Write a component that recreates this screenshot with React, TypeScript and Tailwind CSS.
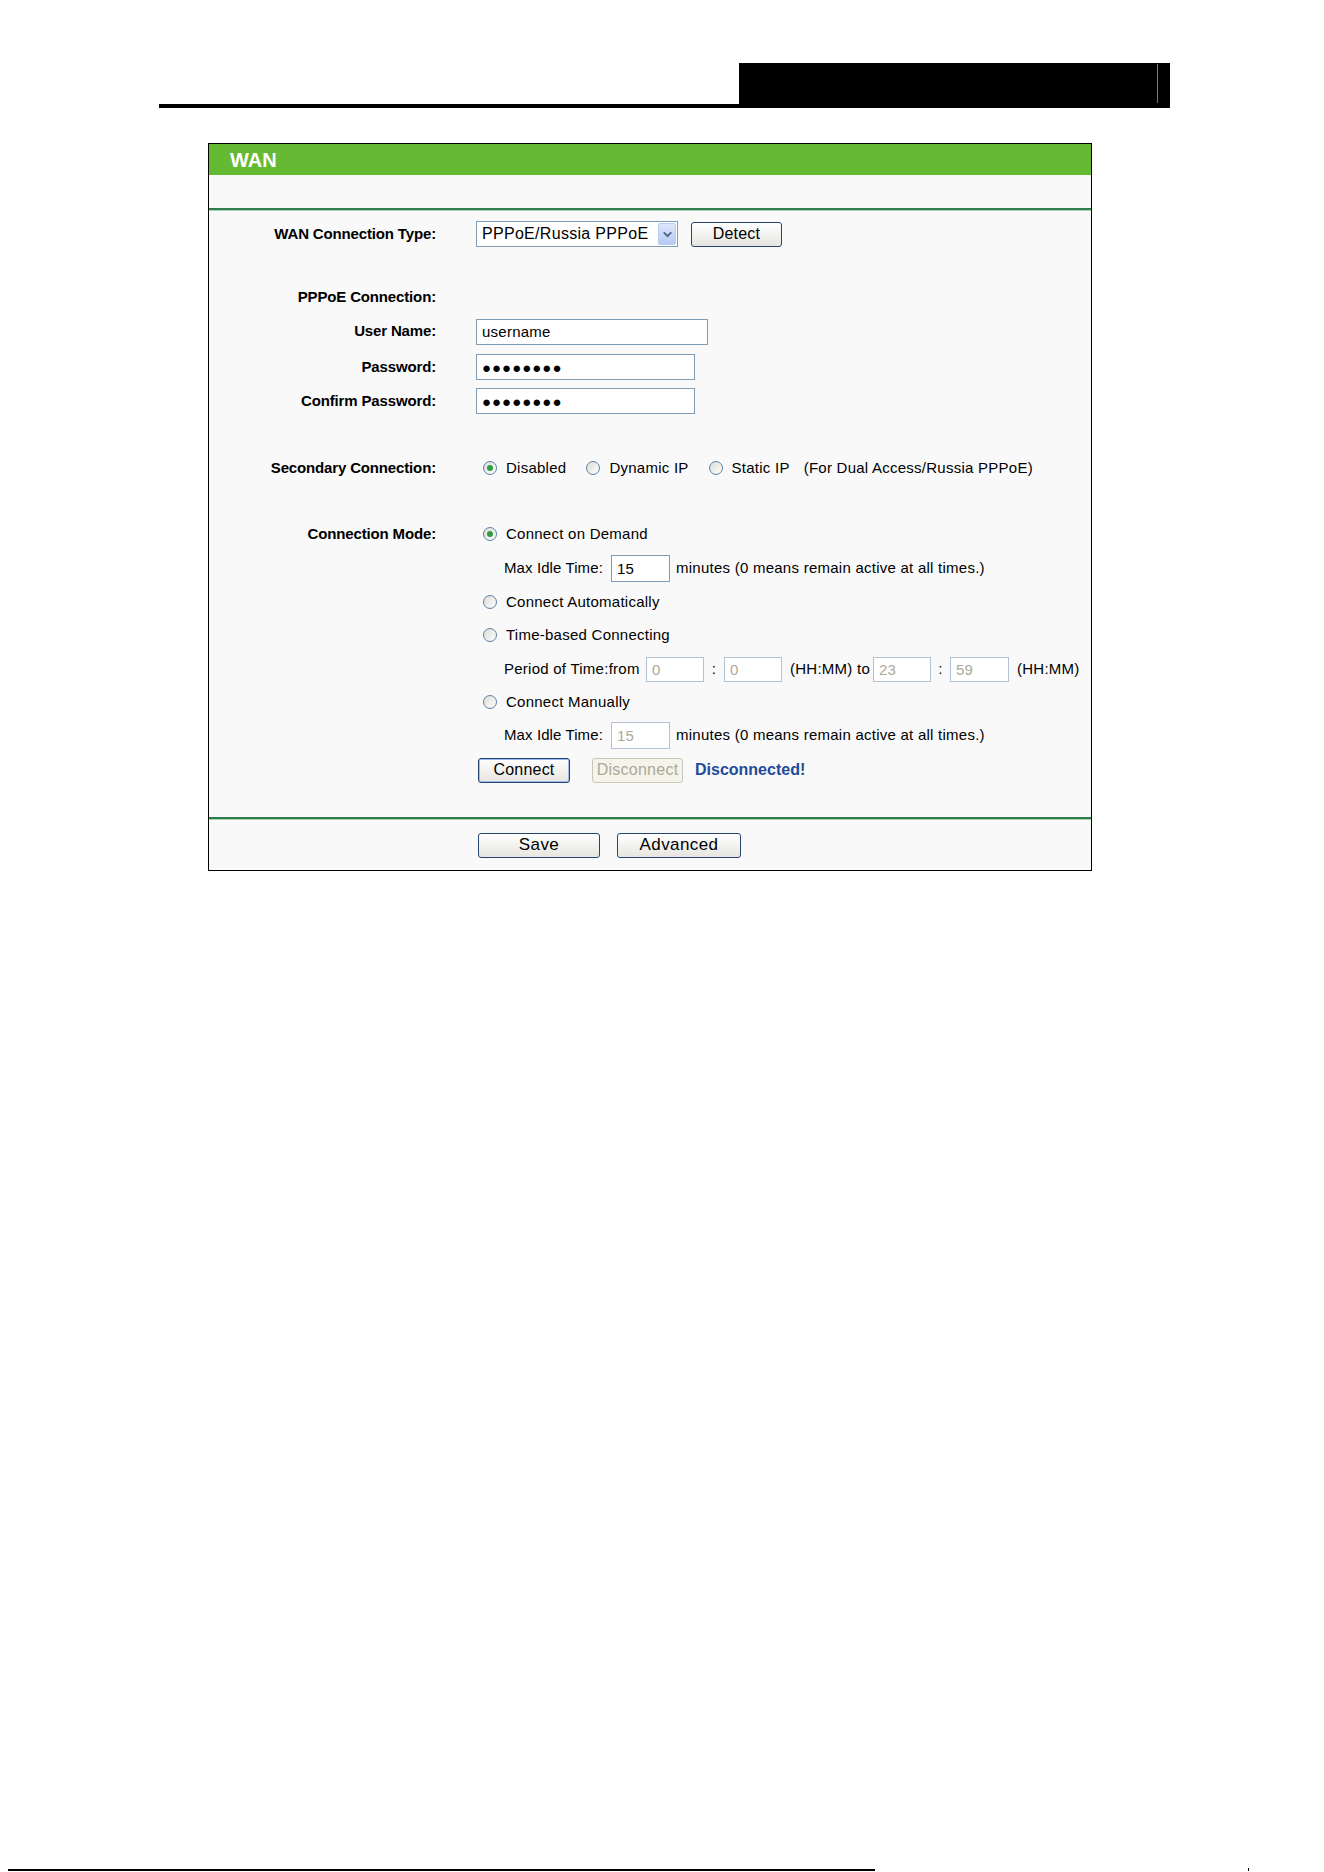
import { ChevronDown } from "lucide-react";
import type { ReactNode } from "react";

const labelCls =
  "w-[227px] shrink-0 text-right text-[15px] font-bold tracking-[-0.15px] text-black";
const inputCls =
  "h-[26px] border border-[#7f9db9] bg-white px-[5px] text-[15px] text-black outline-none";
const offInputCls =
  "h-[25px] border border-[#b2c2d4] bg-white px-[5px] text-[15px] text-[#aca899] outline-none";
const btnCls =
  "flex h-[25px] items-center justify-center rounded-[3px] border border-[#24466e] bg-gradient-to-b from-white to-[#e6e5df] text-[16px] tracking-[0.2px] text-black";

function Row({ h, label, children }: { h: string; label?: string; children?: ReactNode }) {
  return (
    <div className={`flex items-center ${h}`}>
      <div className={labelCls}>{label}</div>
      <div className="flex items-center pl-[40px] tracking-[0.25px]">{children}</div>
    </div>
  );
}

function Radio({ checked }: { checked?: boolean }) {
  return (
    <span className="flex h-[14px] w-[14px] shrink-0 items-center justify-center rounded-full border border-[#5f7fa5] bg-gradient-to-br from-[#dcdcd6] to-white">
      {checked && <span className="h-[6px] w-[6px] rounded-full bg-[#2f9e3e]" />}
    </span>
  );
}

function Option({ checked, text, className }: { checked?: boolean; text: string; className?: string }) {
  return (
    <label className={`flex items-center gap-[9px] text-[15px] ${className ?? ""}`}>
      <Radio checked={checked} />
      <span>{text}</span>
    </label>
  );
}

function GreenRule() {
  return (
    <div>
      <div className="h-[2px] bg-[#2f7d4c]" />
      <div className="h-px bg-[#a9d6b2]" />
    </div>
  );
}

export default function App() {
  return (
    <div className="flex h-[1872px] w-[1324px] flex-col items-start bg-white font-['Liberation_Sans',Arial,sans-serif] text-black">
      {/* page heading strip */}
      <div className="ml-[159px] mt-[63px] flex w-[1011px]">
        <div className="h-[45px] flex-1 border-b-4 border-black" />
        <div className="flex h-[45px] w-[431px] bg-black pl-[418px] pt-px">
          <div className="h-[39px] w-px bg-[#7a7a7a]" />
        </div>
      </div>

      {/* WAN settings panel */}
      <div className="ml-[208px] mt-[35px] w-[884px] border border-black bg-[#f9f9f9]">
        <div className="flex h-[31px] items-center bg-[#66b933] pl-[21px] text-[20px] font-bold text-white">
          WAN
        </div>
        <div className="h-[33px]" />
        <GreenRule />

        <Row h="h-[46px]" label="WAN Connection Type:">
          <div className="flex h-[26px] w-[202px] items-center border border-[#7f9db9] bg-white pl-[5px] pr-px text-[16px] tracking-[0.3px]">
            <span className="flex-1 whitespace-nowrap">PPPoE/Russia PPPoE</span>
            <span className="flex h-[22px] w-[18px] shrink-0 items-center justify-center rounded-[2px] border border-[#b9cbf0] bg-gradient-to-b from-[#dde7fb] to-[#b5cbf3]">
              <ChevronDown size={13} strokeWidth={3.5} className="text-[#4d6185]" />
            </span>
          </div>
          <button className={`${btnCls} ml-[13px] w-[91px]`}>Detect</button>
        </Row>
        <div className="h-[23px]" />

        <Row h="h-[34px]" label="PPPoE Connection:" />
        <Row h="h-[35px]" label="User Name:">
          <input readOnly value="username" className={`${inputCls} w-[232px]`} />
        </Row>
        <Row h="h-[36px]" label="Password:">
          <input readOnly value="●●●●●●●●" className={`${inputCls} w-[219px] text-[13px] tracking-[1px]`} />
        </Row>
        <Row h="h-[32px]" label="Confirm Password:">
          <input readOnly value="●●●●●●●●" className={`${inputCls} w-[219px] text-[13px] tracking-[1px]`} />
        </Row>
        <div className="h-[34px]" />

        <Row h="h-[34px]" label="Secondary Connection:">
          <Option checked text="Disabled" className="ml-[7px]" />
          <Option text="Dynamic IP" className="ml-[20px]" />
          <Option text="Static IP" className="ml-[20px]" />
          <span className="ml-[14px] text-[15px]">(For Dual Access/Russia PPPoE)</span>
        </Row>
        <div className="h-[32px]" />

        <Row h="h-[34px]" label="Connection Mode:">
          <Option checked text="Connect on Demand" className="ml-[7px]" />
        </Row>
        <Row h="h-[34px]">
          <span className="ml-[28px] w-[107px] text-[15px] tracking-[0.1px]">Max Idle Time:</span>
          <input readOnly value="15" className={`${inputCls} h-[27px] w-[59px]`} />
          <span className="ml-[6px] text-[15px]">minutes (0 means remain active at all times.)</span>
        </Row>
        <Row h="h-[34px]">
          <Option text="Connect Automatically" className="ml-[7px]" />
        </Row>
        <Row h="h-[32px]">
          <Option text="Time-based Connecting" className="ml-[7px]" />
        </Row>
        <Row h="h-[36px]">
          <span className="ml-[28px] w-[142px] text-[15px]">Period of Time:from</span>
          <input readOnly value="0" className={`${offInputCls} w-[58px]`} />
          <span className="w-[20px] text-center text-[15px]">:</span>
          <input readOnly value="0" className={`${offInputCls} w-[58px]`} />
          <span className="w-[91px] pl-[8px] text-[15px]">(HH:MM) to</span>
          <input readOnly value="23" className={`${offInputCls} w-[58px]`} />
          <span className="w-[19px] text-center text-[15px]">:</span>
          <input readOnly value="59" className={`${offInputCls} w-[59px]`} />
          <span className="pl-[8px] text-[15px]">(HH:MM)</span>
        </Row>
        <Row h="h-[30px]">
          <Option text="Connect Manually" className="ml-[7px]" />
        </Row>
        <Row h="h-[36px]">
          <span className="ml-[28px] w-[107px] text-[15px] tracking-[0.1px]">Max Idle Time:</span>
          <input readOnly value="15" className={`${offInputCls} h-[27px] w-[59px]`} />
          <span className="ml-[6px] text-[15px]">minutes (0 means remain active at all times.)</span>
        </Row>
        <Row h="h-[34px]">
          <button className={`${btnCls} ml-[2px] w-[92px] border-[#1b4f93] shadow-[inset_0_0_0_1px_#9dbbea]`}>
            Connect
          </button>
          <button
            disabled
            className="ml-[22px] flex h-[25px] w-[91px] items-center justify-center rounded-[3px] border border-[#c9c7ba] bg-[#f5f4ea] text-[16px] text-[#aca899]"
          >
            Disconnect
          </button>
          <span className="ml-[12px] text-[16px] font-bold tracking-normal text-[#1e4b9c]">Disconnected!</span>
        </Row>
        <div className="h-[30px]" />
        <GreenRule />

        <Row h="h-[50px]">
          <button className={`${btnCls} ml-[2px] w-[122px] text-[17px] tracking-[0.4px]`}>Save</button>
          <button className={`${btnCls} ml-[17px] w-[124px] text-[17px] tracking-[0.4px]`}>Advanced</button>
        </Row>
      </div>

      {/* footer rule */}
      <div className="mt-auto mb-px flex w-full items-end">
        <div className="ml-[8px] h-[2px] w-[867px] bg-black" />
        <div className="ml-[373px] h-[3px] w-px bg-black" />
      </div>
    </div>
  );
}
